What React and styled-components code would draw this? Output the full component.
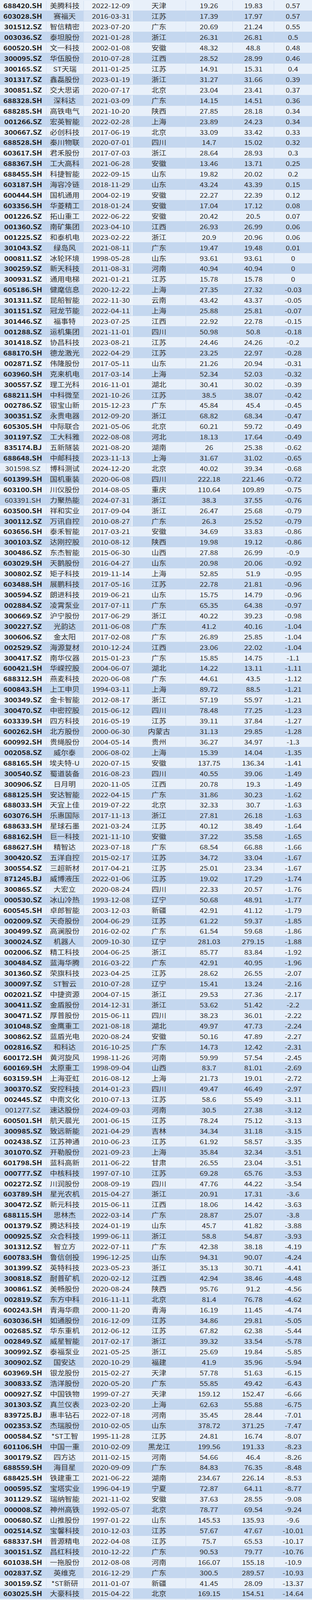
import React from 'react'
import styled, { createGlobalStyle } from 'styled-components'

const GlobalStyle = createGlobalStyle`
  html, body {
    margin: 0;
    padding: 0;
    background: #e8f0fa;
  }
  body {
    font-family: "Noto Sans CJK SC", "Noto Sans", sans-serif;
  }
`

// code|name|date|province|before|after|change  (* before code = regular weight)
const RAW = `688420.SH|美腾科技|2022-12-09|天津|19.26|19.83|0.57
603028.SH|赛福天|2016-03-31|江苏|17.39|17.97|0.57
301512.SZ|智信精密|2023-07-20|广东|20.69|21.24|0.55
003036.SZ|泰坦股份|2021-01-28|浙江|26.31|26.81|0.5
600520.SH|文一科技|2002-01-08|安徽|48.32|48.8|0.48
300095.SZ|华伍股份|2010-07-28|江西|28.52|28.99|0.46
300165.SZ|ST天瑞|2011-01-25|江苏|14.91|15.31|0.4
301317.SZ|鑫磊股份|2023-01-19|浙江|31.27|31.66|0.39
300851.SZ|交大思诺|2020-07-17|北京|23.04|23.41|0.37
688328.SH|深科达|2021-03-09|广东|14.15|14.51|0.36
688285.SH|高铁电气|2021-10-20|陕西|27.85|28.18|0.34
001266.SZ|宏英智能|2022-02-28|上海|23.89|24.23|0.34
300667.SZ|必创科技|2017-06-19|北京|33.09|33.42|0.33
688528.SH|秦川物联|2020-07-01|四川|14.7|15.02|0.32
603617.SH|君禾股份|2017-07-03|浙江|28.64|28.93|0.3
688367.SH|工大高科|2021-06-28|安徽|13.46|13.71|0.25
688455.SH|科捷智能|2022-09-15|山东|19.82|20.02|0.2
603187.SH|海容冷链|2018-11-29|山东|43.24|43.39|0.15
600444.SH|国机通用|2004-02-19|安徽|22.27|22.39|0.12
603356.SH|华菱精工|2018-01-24|安徽|17.04|17.12|0.08
001226.SZ|拓山重工|2022-06-22|安徽|20.42|20.5|0.07
001360.SZ|南矿集团|2023-04-10|江西|26.93|26.99|0.06
001225.SZ|和泰机电|2023-02-22|浙江|20.9|20.96|0.06
301043.SZ|绿岛风|2021-08-11|广东|19.47|19.48|0.01
000811.SZ|冰轮环境|1998-05-28|山东|93.61|93.61|0
300259.SZ|新天科技|2011-08-31|河南|40.94|40.94|0
300931.SZ|通用电梯|2021-01-21|江苏|15.78|15.78|0
605186.SH|健麾信息|2020-12-22|上海|27.35|27.32|-0.03
301311.SZ|昆船智能|2022-11-30|云南|43.42|43.37|-0.05
301151.SZ|冠龙节能|2022-04-11|上海|25.88|25.81|-0.07
301446.SZ|福事特|2023-07-25|江西|22.92|22.78|-0.15
001288.SZ|运机集团|2021-11-01|四川|50.98|50.8|-0.18
301418.SZ|协昌科技|2023-08-21|江苏|24.46|24.26|-0.2
688170.SH|德龙激光|2022-04-29|江苏|23.25|22.97|-0.28
002871.SZ|伟隆股份|2017-05-11|山东|21.26|20.94|-0.31
603960.SH|克来机电|2017-03-14|上海|52.34|52.03|-0.32
300557.SZ|理工光科|2016-11-01|湖北|30.41|30.02|-0.39
688211.SH|中科微至|2021-10-26|江苏|38.5|38.07|-0.42
002786.SZ|银宝山新|2015-12-23|广东|45.84|45.4|-0.45
300351.SZ|永贵电器|2012-09-20|浙江|68.82|68.34|-0.47
605305.SH|中际联合|2021-05-06|北京|60.21|59.72|-0.49
301197.SZ|工大科雅|2022-08-08|河北|18.13|17.64|-0.49
835174.BJ|五新隧装|2021-08-20|湖南|26|25.38|-0.62
688648.SH|中邮科技|2023-11-13|上海|31.67|31.02|-0.65
*301598.SZ|博科测试|2024-12-20|北京|40.02|39.34|-0.68
601399.SH|国机重装|2020-06-08|四川|222.18|221.46|-0.72
603100.SH|川仪股份|2014-08-05|重庆|110.64|109.89|-0.75
*603391.SH|力聚热能|2024-07-31|浙江|38.3|37.55|-0.76
603500.SH|祥和实业|2017-09-04|浙江|26.47|25.68|-0.79
300112.SZ|万讯自控|2010-08-27|广东|26.3|25.52|-0.79
603656.SH|泰禾智能|2017-03-21|安徽|34.69|33.83|-0.86
300103.SZ|达刚控股|2010-08-12|陕西|19.98|19.12|-0.86
300486.SZ|东杰智能|2015-06-30|山西|27.88|26.99|-0.9
603029.SH|天鹅股份|2016-04-27|山东|20.98|20.06|-0.92
300802.SZ|矩子科技|2019-11-14|上海|52.85|51.9|-0.95
603488.SH|展鹏科技|2017-05-16|江苏|22.78|21.81|-0.96
300594.SZ|朗进科技|2019-06-21|山东|15.75|14.79|-0.96
002884.SZ|凌霄泵业|2017-07-11|广东|65.35|64.38|-0.97
300669.SZ|沪宁股份|2017-06-29|浙江|40.22|39.23|-0.98
300227.SZ|光韵达|2011-06-08|广东|41.2|40.16|-1.04
300606.SZ|金太阳|2017-02-08|广东|26.89|25.85|-1.04
002529.SZ|海源复材|2010-12-24|江西|23.06|22.02|-1.04
300417.SZ|南华仪器|2015-01-23|广东|15.85|14.75|-1.1
600421.SH|华嵘控股|2004-06-07|湖北|14.22|13.11|-1.11
688312.SH|燕麦科技|2020-06-08|广东|44.61|43.5|-1.12
600843.SH|上工申贝|1994-03-11|上海|89.72|88.5|-1.21
300349.SZ|金卡智能|2012-08-17|浙江|57.19|55.97|-1.21
300470.SZ|中密控股|2015-06-12|四川|78.48|77.25|-1.23
603339.SH|四方科技|2016-05-19|江苏|39.11|37.84|-1.27
600262.SH|北方股份|2000-06-30|内蒙古|31.13|29.85|-1.28
600992.SH|贵绳股份|2004-05-14|贵州|36.27|34.97|-1.3
002058.SZ|威尔泰|2006-08-02|上海|15.39|14.04|-1.35
688165.SH|埃夫特-U|2020-07-15|安徽|137.75|136.34|-1.41
300540.SZ|蜀道装备|2016-08-23|四川|40.55|39.06|-1.49
300906.SZ|日月明|2020-11-05|江西|20.78|19.3|-1.49
688125.SH|安达智能|2022-04-15|广东|31.86|30.23|-1.62
688033.SH|天宜上佳|2019-07-22|北京|32.33|30.7|-1.63
603076.SH|乐惠国际|2017-11-13|浙江|27.81|26.18|-1.63
688633.SH|星球石墨|2021-03-24|江苏|40.12|38.49|-1.64
688162.SH|巨一科技|2021-11-10|安徽|37.22|35.58|-1.65
688627.SH|精智达|2023-07-18|广东|68.54|66.88|-1.66
300420.SZ|五洋自控|2015-02-17|江苏|34.72|33.04|-1.67
300554.SZ|三超新材|2017-04-21|江苏|25.01|23.34|-1.67
871245.BJ|威博液压|2022-01-06|江苏|19.02|17.29|-1.74
300865.SZ|大宏立|2020-08-24|四川|22.33|20.57|-1.76
000530.SZ|冰山冷热|1993-12-08|辽宁|50.68|48.91|-1.77
600545.SH|卓郎智能|2003-12-03|新疆|42.91|41.12|-1.79
002009.SZ|天奇股份|2004-06-29|江苏|61.22|59.37|-1.85
300499.SZ|高澜股份|2016-02-02|广东|61.54|59.68|-1.86
300024.SZ|机器人|2009-10-30|辽宁|281.03|279.15|-1.88
002006.SZ|精工科技|2004-06-25|浙江|85.77|83.84|-1.92
300484.SZ|蓝海华腾|2016-03-22|广东|42.91|40.95|-1.96
301360.SZ|荣旗科技|2023-04-25|江苏|28.62|26.55|-2.07
300097.SZ|ST智云|2010-07-28|辽宁|15.41|13.24|-2.16
002021.SZ|中捷资源|2004-07-15|浙江|29.53|27.36|-2.17
300411.SZ|金盾股份|2014-12-31|浙江|53.62|51.42|-2.2
300471.SZ|厚普股份|2015-06-11|四川|38.23|36.01|-2.22
301048.SZ|金鹰重工|2021-08-18|湖北|49.97|47.73|-2.24
300862.SZ|蓝盾光电|2020-08-24|安徽|50.16|47.89|-2.27
002816.SZ|和科达|2016-10-25|广东|14.73|12.42|-2.31
600172.SH|黄河旋风|1998-11-26|河南|59.99|57.54|-2.45
600169.SH|太原重工|1998-09-04|山西|83.7|81.01|-2.69
603159.SH|上海亚虹|2016-08-12|上海|21.73|19.01|-2.72
300370.SZ|安控科技|2014-01-23|四川|49.47|46.49|-2.97
002445.SZ|中南文化|2010-07-13|江苏|58.6|55.49|-3.11
*001277.SZ|速达股份|2024-09-03|河南|30.5|27.38|-3.12
600501.SH|航天晨光|2001-06-15|江苏|78.24|75.12|-3.13
300985.SZ|致远新能|2021-04-29|吉林|34.34|31.18|-3.15
002438.SZ|江苏神通|2010-06-23|江苏|61.92|58.57|-3.35
301070.SZ|开勒股份|2021-09-23|上海|35.84|32.34|-3.51
601798.SH|蓝科高新|2011-06-22|甘肃|26.55|23.04|-3.51
000777.SZ|中核科技|1997-07-10|江苏|69.28|65.76|-3.53
002272.SZ|川润股份|2008-09-19|四川|47.76|44.22|-3.54
603789.SH|星光农机|2015-04-27|浙江|20.91|17.31|-3.6
300472.SZ|新元科技|2015-06-11|江西|18.06|14.42|-3.63
688115.SH|思林杰|2022-03-14|广东|28.87|25.07|-3.8
001379.SZ|腾达科技|2024-01-19|山东|45.7|41.82|-3.88
000925.SZ|众合科技|1999-06-11|浙江|58.8|54.87|-3.93
301312.SZ|智立方|2022-07-11|广东|42.38|38.18|-4.19
600783.SH|鲁信创投|1996-12-25|山东|94.31|90.07|-4.24
301399.SZ|英特科技|2023-05-23|浙江|35.13|30.71|-4.41
300818.SZ|耐普矿机|2020-02-12|江西|42.94|38.46|-4.48
300861.SZ|美畅股份|2020-08-24|陕西|95.76|91.2|-4.56
002819.SZ|东方中科|2016-11-11|北京|81.4|76.78|-4.62
600243.SH|青海华鼎|2000-11-20|青海|16.19|11.45|-4.74
603036.SH|如通股份|2016-12-09|江苏|34.86|29.81|-5.05
002685.SZ|华东重机|2012-06-12|江苏|67.82|62.38|-5.44
002849.SZ|威星智能|2017-02-17|浙江|39.32|33.54|-5.78
300992.SZ|泰福泵业|2021-05-25|浙江|25.69|19.84|-5.85
300902.SZ|国安达|2020-10-29|福建|41.9|35.96|-5.94
603969.SH|银龙股份|2015-02-27|天津|57.78|51.63|-6.15
300833.SZ|浩洋股份|2020-05-20|广东|55.85|49.42|-6.43
000927.SZ|中国铁物|1999-07-27|天津|159.12|152.47|-6.66
301303.SZ|真兰仪表|2023-02-20|上海|62.63|55.88|-6.75
839725.BJ|惠丰钻石|2022-07-18|河南|35.45|28.44|-7.01
002353.SZ|杰瑞股份|2010-02-05|山东|378.72|371.25|-7.47
000584.SZ|*ST工智|1995-11-28|江苏|24.81|16.74|-8.07
601106.SH|中国一重|2010-02-09|黑龙江|199.56|191.33|-8.23
300179.SZ|四方达|2011-02-15|河南|54.66|46.4|-8.26
688559.SH|海目星|2020-09-09|广东|84.83|76.35|-8.48
688425.SH|铁建重工|2021-06-22|湖南|234.67|226.14|-8.53
000595.SZ|宝塔实业|1996-04-19|宁夏|72.87|64.11|-8.77
301129.SZ|瑞纳智能|2021-11-02|安徽|37.63|28.55|-9.08
000008.SZ|神州高铁|1992-05-07|北京|78.77|69.54|-9.24
000680.SZ|山推股份|1997-01-22|山东|145.53|135.93|-9.6
002514.SZ|宝馨科技|2010-12-03|江苏|57.67|47.67|-10.01
688337.SH|普源精电|2022-04-08|江苏|75.7|65.53|-10.17
300151.SZ|昌红科技|2010-12-22|广东|90.53|79.77|-10.76
601038.SH|一拖股份|2012-08-08|河南|166.07|155.18|-10.9
002837.SZ|英维克|2016-12-29|广东|300.5|289.57|-10.93
300159.SZ|*ST新研|2011-01-07|新疆|41.45|28.09|-13.37
603025.SH|大豪科技|2015-04-22|北京|169.15|154.51|-14.64
000528.SZ|柳工|1993-11-18|广西|243.52|225.75|-17.77
603283.SH|赛腾股份|2017-12-25|江苏|138.54|120.27|-18.27
000988.SZ|华工科技|2000-06-08|湖北|435.38|413.16|-22.22
600579.SH|中化装备|2002-08-09|山东|60.35|37.99|-22.36
600894.SH|广日股份|1996-03-28|广东|127.58|105.13|-22.46
688187.SH|时代电气|2021-09-07|湖南|674.07|647.29|-26.78
603338.SH|浙江鼎力|2015-03-25|浙江|326.7|299.2|-27.49
002444.SZ|巨星科技|2010-07-13|浙江|386.41|353.68|-32.73
001696.SZ|宗申动力|1997-03-06|重庆|285.11|251.91|-33.21
688009.SH|中国通号|2019-07-22|北京|662.92|596.21|-66.72
300757.SZ|罗博特科|2019-01-08|江苏|349.33|282.2|-67.13
601766.SH|中国中车|2008-08-18|北京|2404.96|2026.14|-378.83`

const rows = RAW.split('\n').map(line => {
  const cells = line.split('|')
  const regular = cells[0].startsWith('*')
  cells[0] = cells[0].replace(/^\*/, '')
  return { cells, regular }
})

// the whole sheet is one fixed-height grid so every stripe gets an equal share
const Sheet = styled.div`
  width: 800px;
  height: 4443px;
  box-sizing: border-box;
  padding-top: 1.5px;
  overflow: hidden;
  display: grid;
  grid-template-rows: repeat(${rows.length}, minmax(0, 1fr)) 26.5px;
  color: #2c2c2c;
`

const Row = styled.div`
  display: grid;
  grid-template-columns: 118.5px 96px 125px 137px 120px 106.5px 97px;
  min-height: 0;
  overflow: hidden;
  box-sizing: border-box;
  border-bottom: 1px solid #c9d9ee;
  background: ${({ $dark }) => ($dark ? '#c4d7ef' : '#e8f0fa')};
`

const Cell = styled.div`
  display: flex;
  align-items: center;
  justify-content: center;
  min-width: 0;
  min-height: 0;
  box-sizing: border-box;
  border-right: ${({ $split }) => ($split ? '2px solid #f2f6fc' : '1px solid #cddbef')};
  padding-left: ${({ $shift }) => ($shift ? '16px' : '0')};
  background: ${({ $lighten, $dark }) =>
    $lighten ? ($dark ? '#d8e4f4' : '#edf3fb') : 'transparent'};
  &:last-child {
    border-right: none;
  }
`

const Txt = styled.span`
  display: block;
  flex: none;
  white-space: nowrap;
  font-size: 16.5px;
  line-height: 20px;
  font-weight: ${({ $bold }) => ($bold ? 700 : 400)};
  color: ${({ $bold }) => ($bold ? '#1c1c1c' : '#2e2e2e')};
  transform: scaleX(1.15);
  transform-origin: center;
`

const Footer = styled.div`
  display: flex;
  align-items: center;
  padding-left: 4px;
  min-height: 0;
  overflow: hidden;
  background: #e8f0fa;
  border-bottom: 1px solid #d3e0f1;
  box-sizing: border-box;
`

const FootTxt = styled(Txt)`
  transform-origin: left center;
  color: #333;
`

const App = () => (
  <>
    <GlobalStyle />
    <Sheet>
      {rows.map(({ cells, regular }, i) => {
        const dark = i % 2 === 1
        const [code, name, date, prov, before, after, change] = cells
        return (
          <Row key={code} $dark={dark}>
            <Cell>
              <Txt $bold={!regular}>{code}</Txt>
            </Cell>
            <Cell>
              <Txt>{name}</Txt>
            </Cell>
            <Cell $lighten $dark={dark} $shift $split>
              <Txt>{date}</Txt>
            </Cell>
            <Cell>
              <Txt>{prov}</Txt>
            </Cell>
            <Cell>
              <Txt>{before}</Txt>
            </Cell>
            <Cell>
              <Txt>{after}</Txt>
            </Cell>
            <Cell>
              <Txt>{change}</Txt>
            </Cell>
          </Row>
        )
      })}
      <Footer>
        <FootTxt>数据来源：Wind，时代商业研究院整理</FootTxt>
      </Footer>
    </Sheet>
  </>
)

export default App
